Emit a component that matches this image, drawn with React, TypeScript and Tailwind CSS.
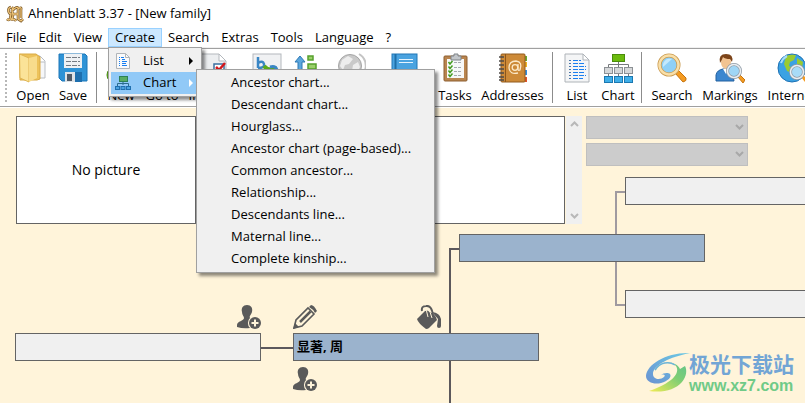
import React from 'react';

interface ToolItem {
  label: string;
  width: string;
  icon: React.ReactNode;
}

const OpenIcon = () => (
  <svg width="30" height="30" viewBox="0 0 30 30">
    <path d="M15 3h7l5 5v17H12z" fill="#f6f7f9" stroke="#b9bdc3" />
    <path d="M21 3v6h6" fill="#fff" stroke="#b9bdc3" />
    <path d="M1.500 1H18l4 3v22l-3 1H2z" fill="#edc25a" stroke="#d9aa45" />
    <path d="M1.500 1L11 5v24l-9-4z" fill="#fbe398" stroke="#e0b553" />
    <path d="M11 5l8-2v22l-8 4z" fill="#f8dc8c" />
  </svg>
);

const SaveIcon = () => (
  <svg width="30" height="30" viewBox="0 0 30 30">
    <path d="M1 1h26l2 2v25H4l-3-3z" fill="#2f93d6" stroke="#1c77b8" />
    <rect x="6" y="1" width="18" height="14" fill="#eef1f4" />
    <path d="M8 4.500h14M8 8.500h14M8 12.500h14" stroke="#737b84" strokeDasharray="5 1" />
    <rect x="7" y="19" width="17" height="10" fill="#dfe3e7" />
    <rect x="9" y="21" width="5" height="7" fill="#505a66" />
    <rect x="17" y="19" width="7" height="10" fill="#1e6fae" />
  </svg>
);

const NewIcon = () => (
  <svg width="30" height="30" viewBox="0 0 30 30">
    <circle cx="9" cy="22" r="8" fill="#63b51f" stroke="#478a12" />
    <path d="M9 17v10M4 22h10" stroke="#fff" strokeWidth="3" />
  </svg>
);

const GoToIcon = () => (
  <svg width="30" height="30" viewBox="0 0 30 30">
    <path d="M3 11h13V4l11 11-11 11v-7H3z" fill="#63b51f" stroke="#478a12" />
  </svg>
);

const CheckPageIcon = () => (
  <svg width="30" height="30" viewBox="0 0 30 30">
    <path d="M-2 1h21l7 7v21H-2z" fill="#eceef0" stroke="#b4b8bd" />
    <path d="M19 1v7h7z" fill="#fff" stroke="#b4b8bd" />
    <rect x="14" y="11" width="10" height="11" fill="#fff" stroke="#3a6f9f" strokeWidth="1.500" />
    <path d="M16 14l3 3 6-7" fill="none" stroke="#d3181c" strokeWidth="2.500" />
  </svg>
);

const RenameIcon = () => (
  <svg width="30" height="30" viewBox="0 0 30 30">
    <rect x="1" y="1" width="28" height="28" fill="#f0f1f3" stroke="#b4b8bd" />
    <path d="M6 4v11M6 10q5-3 6 1t-6 4" fill="none" stroke="#3a86c5" strokeWidth="2.500" />
    <path d="M12 13q4 5 10 3l-1 5" fill="none" stroke="#5aaa1c" strokeWidth="4" />
    <path d="M18 14q7-2 7 5" stroke="#3a86c5" strokeWidth="3" fill="none" />
  </svg>
);

const SortIcon = () => (
  <svg width="30" height="30" viewBox="0 0 30 30">
    <path d="M9 3L4 9h3v19h4V9h3z" fill="#5ba6dd" stroke="#2d79b4" />
    <rect x="17" y="3" width="5" height="4" fill="#9ad06a" stroke="#56a02c" strokeWidth="1.500" />
    <rect x="17" y="11" width="8" height="5" fill="#9ad06a" stroke="#56a02c" strokeWidth="1.500" />
    <rect x="17" y="20" width="11" height="5" fill="#9ad06a" stroke="#56a02c" strokeWidth="1.500" />
  </svg>
);

const GreyGlobeIcon = () => (
  <svg width="30" height="30" viewBox="0 0 30 30">
    <path d="M23 1a14 14 0 0 1-2 25" fill="none" stroke="#c4c4c4" strokeWidth="2" />
    <circle cx="14" cy="13" r="11.500" fill="#c9c9c9" stroke="#a5a5a5" />
    <path d="M6 7l6-4 5 3-4 5-4 1-2 5-3-4zM17 12l5-3 2 5-4 7-4-3z" fill="#ededed" />
  </svg>
);

const BookIcon = () => (
  <svg width="30" height="30" viewBox="0 0 30 30">
    <rect x="2" y="1" width="25" height="28" fill="#4aa3e0" stroke="#2077b5" />
    <path d="M5.500 1v28" stroke="#1f6fa9" strokeWidth="2" />
    <path d="M9 6.500h14M9 9.500h14" stroke="#e6f4ff" />
  </svg>
);

const TasksIcon = () => (
  <svg width="30" height="30" viewBox="0 0 30 30">
    <rect x="4" y="3" width="23" height="25" rx="1" fill="#b9854f" stroke="#8d5f31" />
    <rect x="7" y="6" width="17" height="19" fill="#f7f8f8" />
    <path d="M11 3h3V1h4v2h3v4H11z" fill="#c2c6ca" stroke="#7e8489" />
    <path d="M14 9.500h8M14 14.500h8M14 18.500h8M14 22.500h8" stroke="#a5a9ad" strokeDasharray="3 1" />
    <path d="M8.500 9l1.500 2 2.500-3M8.500 13.500l1.500 2 2.500-3M8.500 17.500l1.500 2 2.500-3M8.500 21.500l1.500 2 2.500-3" fill="none" stroke="#459d20" strokeWidth="1.500" />
  </svg>
);

const AddressesIcon = () => (
  <svg width="30" height="30" viewBox="0 0 30 30">
    <path d="M27 3h2v5h-2z" fill="#6aa82e" />
    <path d="M27 9h2v5h-2z" fill="#f0b323" />
    <path d="M27 17h2v5h-2z" fill="#2f8de0" />
    <path d="M27 24h2v5h-2z" fill="#e2532a" />
    <rect x="3" y="1" width="24" height="28" rx="1" fill="#cd8a38" stroke="#925a1c" />
    <path d="M7.500 1v28" stroke="#8d561b" />
    <path d="M1 4h5M1 8h5M1 12h5M1 16h5M1 20h5M1 24h5M1 27h5" stroke="#4f4b48" strokeWidth="1.500" />
    <circle cx="17" cy="14.500" r="2.800" fill="none" stroke="#fbe9c9" strokeWidth="1.300" />
    <path d="M20 11v5q0 2 2 1 3-8-4-9-7 0-7 7 1 7 9 5" fill="none" stroke="#fbe9c9" strokeWidth="1.300" />
  </svg>
);

const ListIcon = () => (
  <svg width="30" height="30" viewBox="0 0 30 30">
    <path d="M3 1h18l6 6v22H3z" fill="#f4f5f6" stroke="#aeb3b8" />
    <path d="M21 1v6h6z" fill="#fff" stroke="#aeb3b8" />
    <path d="M7 7.500h2M7 10.500h2M7 13.500h2M7 16.500h2M7 19.500h2M7 22.500h2M7 25.500h2" stroke="#4a76a8" />
    <path d="M11 7.500h8M11 10.500h12M11 13.500h13M11 16.500h13M11 19.500h12M11 22.500h13M11 25.500h10" stroke="#1a7ff0" strokeDasharray="5 1" />
  </svg>
);

const SmallListIcon = () => (
  <svg width="16" height="16" viewBox="0 0 16 16">
    <path d="M1.500.5h9l4 4v11h-13z" fill="#fafafa" stroke="#b0b4b8" />
    <path d="M10.500.5v4h4" fill="none" stroke="#b0b4b8" />
    <path d="M4 4.500h1M4 6.500h1M4 8.500h1M4 10.500h1M4 12.500h1M6 4.500h3M7 6.500h3M7 8.500h5M7 10.500h4M7 12.500h5" stroke="#1a7ff0" strokeWidth="1.200" />
  </svg>
);

const ChartIcon = () => (
  <svg width="30" height="30" viewBox="0 0 30 30">
    <path d="M15.500 8v7M5.500 15v-3.500h20V15M5.500 20v4M15.500 20v4M25.500 20v4" fill="none" stroke="#76797c" />
    <rect x="9.500" y="1.500" width="12" height="7" fill="#6bbb0d" stroke="#4a8c0c" />
    <g fill="#d5d7d9" stroke="#8c9094">
      <rect x="1.500" y="14.500" width="8" height="6" />
      <rect x="11.500" y="14.500" width="8" height="6" />
      <rect x="21.500" y="14.500" width="8" height="6" />
    </g>
    <g fill="#3faee8" stroke="#1b78b1">
      <rect x="1.500" y="23.500" width="8" height="6" />
      <rect x="11.500" y="23.500" width="8" height="6" />
      <rect x="21.500" y="23.500" width="8" height="6" />
    </g>
  </svg>
);

const SmallChartIcon = () => (
  <svg width="16" height="16" viewBox="0 0 16 16">
    <path d="M8 5v5M2.500 11V8.500h11V11" fill="none" stroke="#2b6d8e" />
    <rect x="4.500" y="1.500" width="8" height="5" fill="#58ab62" stroke="#2c8155" />
    <g fill="#4ba3df" stroke="#206fae">
      <rect x="0.500" y="11.500" width="4" height="3" />
      <rect x="6" y="11.500" width="4" height="3" />
      <rect x="11.500" y="11.500" width="4" height="3" />
    </g>
  </svg>
);

const SearchIcon = () => (
  <svg width="30" height="30" viewBox="0 0 30 30">
    <path d="M18 20l3-3 8 8q1 3-3 4z" fill="#f59c22" stroke="#c57410" />
    <circle cx="12" cy="12" r="9.500" fill="#8fd0f7" stroke="#c99a4f" strokeWidth="4" />
    <circle cx="12" cy="12" r="9.500" fill="none" stroke="#f9dfa8" strokeWidth="2.500" />
    <path d="M6 14a7 7 0 0 1 9-8z" fill="#c4e9fd" />
  </svg>
);

const MarkingsIcon = () => (
  <svg width="30" height="30" viewBox="0 0 30 30">
    <path d="M1 28v-6q1-5 7-6h5q5 2 6 12z" fill="#3b86cf" stroke="#22609f" />
    <path d="M8 16l3 5 3-5z" fill="#fff" />
    <ellipse cx="11" cy="9" rx="5" ry="7" fill="#f2c391" />
    <path d="M5 10q-2-9 6-9t6 8l-2-3q-5 0-7-2-1 3-3 6z" fill="#7c4419" />
    <path d="M23 24l2-2 5 5-2 3z" fill="#f59c22" stroke="#c57410" />
    <circle cx="19" cy="18" r="6.500" fill="#9fd6f6" stroke="#8f9aa5" strokeWidth="3" />
    <circle cx="19" cy="18" r="6.500" fill="none" stroke="#e9eef2" strokeWidth="1.500" />
  </svg>
);

const InternetIcon = () => (
  <svg width="30" height="30" viewBox="0 0 30 30">
    <circle cx="15" cy="15" r="14" fill="#3ba2e3" stroke="#1e71b4" />
    <path d="M9 3q5-2 10-1l-2 5-4 2-1 4 4 2-1 5-5-2-3-7zM20 5l6 4-1 6-5-4z" fill="#9bcb30" />
    <path d="M4 10q2-5 6-7" stroke="#a9ddfa" strokeWidth="2" fill="none" />
    <path d="M24 24l2-2 4 4-2 3z" fill="#f59c22" />
    <circle cx="20" cy="19" r="6.500" fill="#a8dbf7" stroke="#8f9aa5" strokeWidth="3" />
    <circle cx="20" cy="19" r="6.500" fill="none" stroke="#e9eef2" strokeWidth="1.500" />
  </svg>
);

const AppLogo = () => (
  <svg width="18" height="18" viewBox="0 0 18 18" fill="none">
    <path d="M5 2Q2 3 2.500 6T5 9l-1 5q-1 2-3 0M7.500 2Q5 5 6.500 8T5 15q3-2 5 1M7 5q4-4 5-2v11l3 2 2-2M12 4q4-3 3 1v8M7 9h5" stroke="#7a5726" strokeWidth="2.600" />
    <path d="M5 2Q2 3 2.500 6T5 9l-1 5q-1 2-3 0M7.500 2Q5 5 6.500 8T5 15q3-2 5 1M7 5q4-4 5-2v11l3 2 2-2M12 4q4-3 3 1v8M7 9h5" stroke="#eec479" strokeWidth="1.300" />
  </svg>
);

const AddPersonIcon = () => (
  <svg width="24" height="24" viewBox="0 0 24 24">
    <path d="M10 0C6 0 4 3 5 7c0 3 2 4 2 6 0 3-7 3-7 7v2q6 2 13 1a7 7 0 0 1 0-10c-1-2 1-3 2-6C16 3 14 0 10 0z" fill="#5a5a5a" />
    <circle cx="18" cy="18" r="6" fill="#5a5a5a" />
    <path d="M18 14.500v7M14.500 18h7" stroke="#fff4da" strokeWidth="2" />
  </svg>
);

const PencilIcon = () => (
  <svg width="24" height="24" viewBox="0 0 24 24">
    <path d="M1 23l2-8L15 3l6 6L9 21z" fill="#fff4da" stroke="#5a5a5a" strokeWidth="1.600" />
    <path d="M7 17L17.500 6.500" stroke="#5a5a5a" strokeWidth="2.500" />
    <path d="M0 24l2-6 4 4z" fill="#5a5a5a" />
    <path d="M16 2l2-2q3 0 6 6l-2 2q-2-4-6-6z" fill="#5a5a5a" />
  </svg>
);

const BucketIcon = () => (
  <svg width="24" height="24" viewBox="0 0 24 24">
    <path d="M9 5L0 14q1 4 9 10 2 0 3-1l8-8q-1-6-11-10z" fill="#5a5a5a" />
    <path d="M5 6q-1-5 4-5 6-1 7 10" fill="none" stroke="#5a5a5a" strokeWidth="2" />
    <path d="M9 4l2 8M8 6q2-4 5 1l2 6" stroke="#fff4da" fill="none" />
    <path d="M15 7q8 1 9 7v7q0 2-2 2t-2-2l1-7z" fill="#5a5a5a" />
  </svg>
);

const SwirlLogo = () => (
  <svg width="46" height="42" viewBox="0 0 46 42" fill="none">
    <defs>
      <linearGradient id="swirl-blue" x1="0" y1="1" x2="1" y2="0">
        <stop offset="0" stopColor="#6a92d2" />
        <stop offset="1" stopColor="#6cc9e4" />
      </linearGradient>
      <linearGradient id="swirl-green" x1="0" y1="1" x2="1" y2="0">
        <stop offset="0" stopColor="#f3ec55" />
        <stop offset="0.600" stopColor="#7fce74" />
        <stop offset="1" stopColor="#62c48c" />
      </linearGradient>
    </defs>
    <path d="M10 20c3-9 15-13 21-6 5 8-6 18-27 25 14 2 26-1 33-9 5-6 5-12 3-16l-5 3C31 8 13 8 10 20z" fill="url(#swirl-green)" />
    <path d="M45 1C22 0 2 12 1 24c0 6 8 9 15 7 7-2 11-6 9-9-2-2-7-1-9 1 3-1 5 0 3 2-3 3-11 3-11-3C8 13 25 5 45 1z" fill="url(#swirl-blue)" />
    <path d="M10 18c5-8 14-9 20-5" stroke="#6db4d8" strokeWidth="1.500" />
  </svg>
);

const Chevron = ({ up = false, color = '#b8b8b8' }: { up?: boolean; color?: string }) => (
  <svg width="9" height="6" viewBox="0 0 9 6" fill="none">
    <path d={up ? 'M1 5l3.500-3.500L8 5' : 'M1 1l3.500 3.500L8 1'} stroke={color} strokeWidth="2" />
  </svg>
);

const toolGroups: ToolItem[][] = [
  [
    { label: 'Open', width: 'w-10', icon: <OpenIcon /> },
    { label: 'Save', width: 'w-10', icon: <SaveIcon /> },
  ],
  [
    { label: 'New', width: 'w-[42px]', icon: <NewIcon /> },
    { label: 'Go to', width: 'w-10', icon: <GoToIcon /> },
    { label: 'Input list', width: 'w-[66px]', icon: <CheckPageIcon /> },
    { label: 'Name', width: 'w-[38px]', icon: <RenameIcon /> },
    { label: 'Sort', width: 'w-10', icon: <SortIcon /> },
    { label: 'Places', width: 'w-[50px]', icon: <GreyGlobeIcon /> },
    { label: 'Sources', width: 'w-[58px]', icon: <BookIcon /> },
    { label: 'Tasks', width: 'w-[42px]', icon: <TasksIcon /> },
    { label: 'Addresses', width: 'w-[73px]', icon: <AddressesIcon /> },
  ],
  [
    { label: 'List', width: 'w-[42px]', icon: <ListIcon /> },
    { label: 'Chart', width: 'w-10', icon: <ChartIcon /> },
  ],
  [
    { label: 'Search', width: 'w-[54px]', icon: <SearchIcon /> },
    { label: 'Markings', width: 'w-[62px]', icon: <MarkingsIcon /> },
    { label: 'Internet', width: 'w-[62px]', icon: <InternetIcon /> },
  ],
];

const chartItems = [
  'Ancestor chart...',
  'Descendant chart...',
  'Hourglass...',
  'Ancestor chart (page-based)...',
  'Common ancestor...',
  'Relationship...',
  'Descendants line...',
  'Maternal line...',
  'Complete kinship...',
];

const CreateMenu = () => (
  <div className="absolute top-full left-0 z-20 w-[94px] border border-[#a0a0a0] bg-[#f0f0f0] p-0.5 shadow-[3px_3px_3px_rgba(0,0,0,0.45)]">
    <button className="flex h-[22px] w-full items-center pr-1 pl-1">
      <SmallListIcon />
      <span className="ml-3 flex-1 text-left">List</span>
      <svg width="8" height="8" viewBox="0 0 8 8"><path d="M2 0l4 4-4 4z" fill="#000" /></svg>
    </button>
    <button className="flex h-[22px] w-full items-center bg-[#91c9f7] pr-1 pl-1">
      <SmallChartIcon />
      <span className="ml-3 flex-1 text-left">Chart</span>
      <svg width="8" height="8" viewBox="0 0 8 8"><path d="M2 0l4 4-4 4z" fill="#fff" /></svg>
    </button>
    <div className="absolute top-[21px] left-[87px] w-[239px] border border-[#a0a0a0] bg-[#f0f0f0] py-0.5 shadow-[3px_3px_3px_rgba(0,0,0,0.45)]">
      {chartItems.map((item) => (
        <button key={item} className="flex h-[22px] w-full items-center pl-[34px] whitespace-nowrap">
          {item}
        </button>
      ))}
    </div>
  </div>
);

const MenuBar = () => (
  <nav className="flex h-5 border-b border-[#f0f0f0]">
    {['File', 'Edit', 'View', 'Create', 'Search', 'Extras', 'Tools', 'Language', '?'].map((name) =>
      name === 'Create' ? (
        <div key={name} className="relative">
          <button className="block h-[19px] border border-[#99d1ff] bg-[#cce8ff] px-1.5 leading-[17px]">{name}</button>
          <CreateMenu />
        </div>
      ) : (
        <button key={name} className="px-1.5">{name}</button>
      )
    )}
  </nav>
);

const Toolbar = () => (
  <div className="flex h-[59px] border-t border-b border-[#a0a0a0] bg-white pl-[5px]">
    <div className="mt-1 mb-1 w-0.5 border-l-2 border-dotted border-[#b8b8b8]" />
    <div className="ml-1.5 flex">
      {toolGroups.map((group, i) => (
        <React.Fragment key={i}>
          {i > 0 && <div className="mx-[3px] my-[3px] w-px shrink-0 bg-[#8c8c8c]" />}
          {group.map((tool) => (
            <button key={tool.label} className={`flex shrink-0 flex-col items-center pt-1 whitespace-nowrap ${tool.width}`}>
              {tool.icon}
              <span className="mt-0.5 leading-5">{tool.label}</span>
            </button>
          ))}
        </React.Fragment>
      ))}
    </div>
  </div>
);

const DisabledSelect = ({ label }: { label: string }) => (
  <div className="relative">
    <select disabled aria-label={label} className="block h-[23px] w-full appearance-none border border-[#bfbfbf] bg-[#cccccc] opacity-100" />
    <div className="pointer-events-none absolute top-2 right-1">
      <Chevron color="#a8a8a8" />
    </div>
  </div>
);

const InfoPanel = () => (
  <div className="flex h-[108px]">
    <div className="flex w-[180px] shrink-0 items-center justify-center border border-[#646464] bg-white text-sm">
      No picture
    </div>
    <textarea aria-label="Notes" className="-ml-px w-[370px] shrink-0 resize-none border border-[#646464] bg-white outline-none" />
    <div className="ml-px flex w-4 shrink-0 flex-col items-center justify-between bg-[#f0f0f0] py-[5px]">
      <button aria-label="Scroll up"><Chevron up /></button>
      <button aria-label="Scroll down"><Chevron /></button>
    </div>
    <div className="ml-1 flex w-[162px] shrink-0 flex-col gap-1">
      <DisabledSelect label="Marriage" />
      <DisabledSelect label="Family" />
    </div>
  </div>
);

// Family tree nodes sit at fixed spots on the free canvas
const FamilyTree = () => (
  <div className="pointer-events-none absolute inset-0 overflow-hidden">
    <svg className="absolute inset-0 h-full w-full" fill="none" strokeWidth="2">
      <path d="M625 84h-9v113h9" stroke="#a09aa0" />
      <path d="M459 141h-9v400" stroke="#5c585c" />
      <path d="M260 240h34" stroke="#5c585c" />
    </svg>
    <button aria-label="Grandfather" className="absolute top-[69px] left-[625px] h-7 w-[246px] border border-[#646464] bg-[#f0f0f0]" />
    <button aria-label="Father" className="absolute top-[126px] left-[459px] h-7 w-[246px] border border-[#646464] bg-[#9bb3cd]" />
    <button aria-label="Grandmother" className="absolute top-[182px] left-[625px] h-7 w-[246px] border border-[#646464] bg-[#f0f0f0]" />
    <button aria-label="Partner" className="absolute top-[225px] left-[15px] h-7 w-[246px] border border-[#646464] bg-[#f0f0f0]" />
    <button className="absolute top-[225px] left-[293px] h-7 w-[246px] border border-[#646464] bg-[#9bb3cd] pl-[3px] text-left text-[13px] font-bold">
      显著, 周
    </button>
    <button aria-label="Add partner" className="absolute top-[197px] left-[237px]"><AddPersonIcon /></button>
    <button aria-label="Edit person" className="absolute top-[197px] left-[293px]"><PencilIcon /></button>
    <button aria-label="Color" className="absolute top-[197px] left-[417px]"><BucketIcon /></button>
    <button aria-label="Add child" className="absolute top-[259px] left-[293px]"><AddPersonIcon /></button>
  </div>
);

const Watermark = () => (
  <div className="absolute right-[11px] bottom-[7px] flex">
    <SwirlLogo />
    <div className="-ml-0.5 flex flex-col">
      <span className="text-[21px] leading-6 font-bold text-[#72a5d5]">极光下载站</span>
      <span className="font-['Liberation_Sans',sans-serif] text-base leading-5 font-bold text-[#70ca87]">www.xz7.com</span>
    </div>
  </div>
);

export default function App() {
  return (
    <div className="flex h-screen flex-col overflow-hidden bg-white font-['Open_Sans','Noto_Sans_CJK_SC',sans-serif] text-[13px] text-black">
      <header className="flex h-7 shrink-0 items-center gap-1 pl-1.5">
        <AppLogo />
        <h1 className="whitespace-nowrap">Ahnenblatt 3.37 - [New family]</h1>
      </header>
      <MenuBar />
      <Toolbar />
      <main className="relative flex-1 border-t border-white bg-[#fff4da] px-4 pt-2">
        <InfoPanel />
        <FamilyTree />
        <Watermark />
      </main>
    </div>
  );
}
